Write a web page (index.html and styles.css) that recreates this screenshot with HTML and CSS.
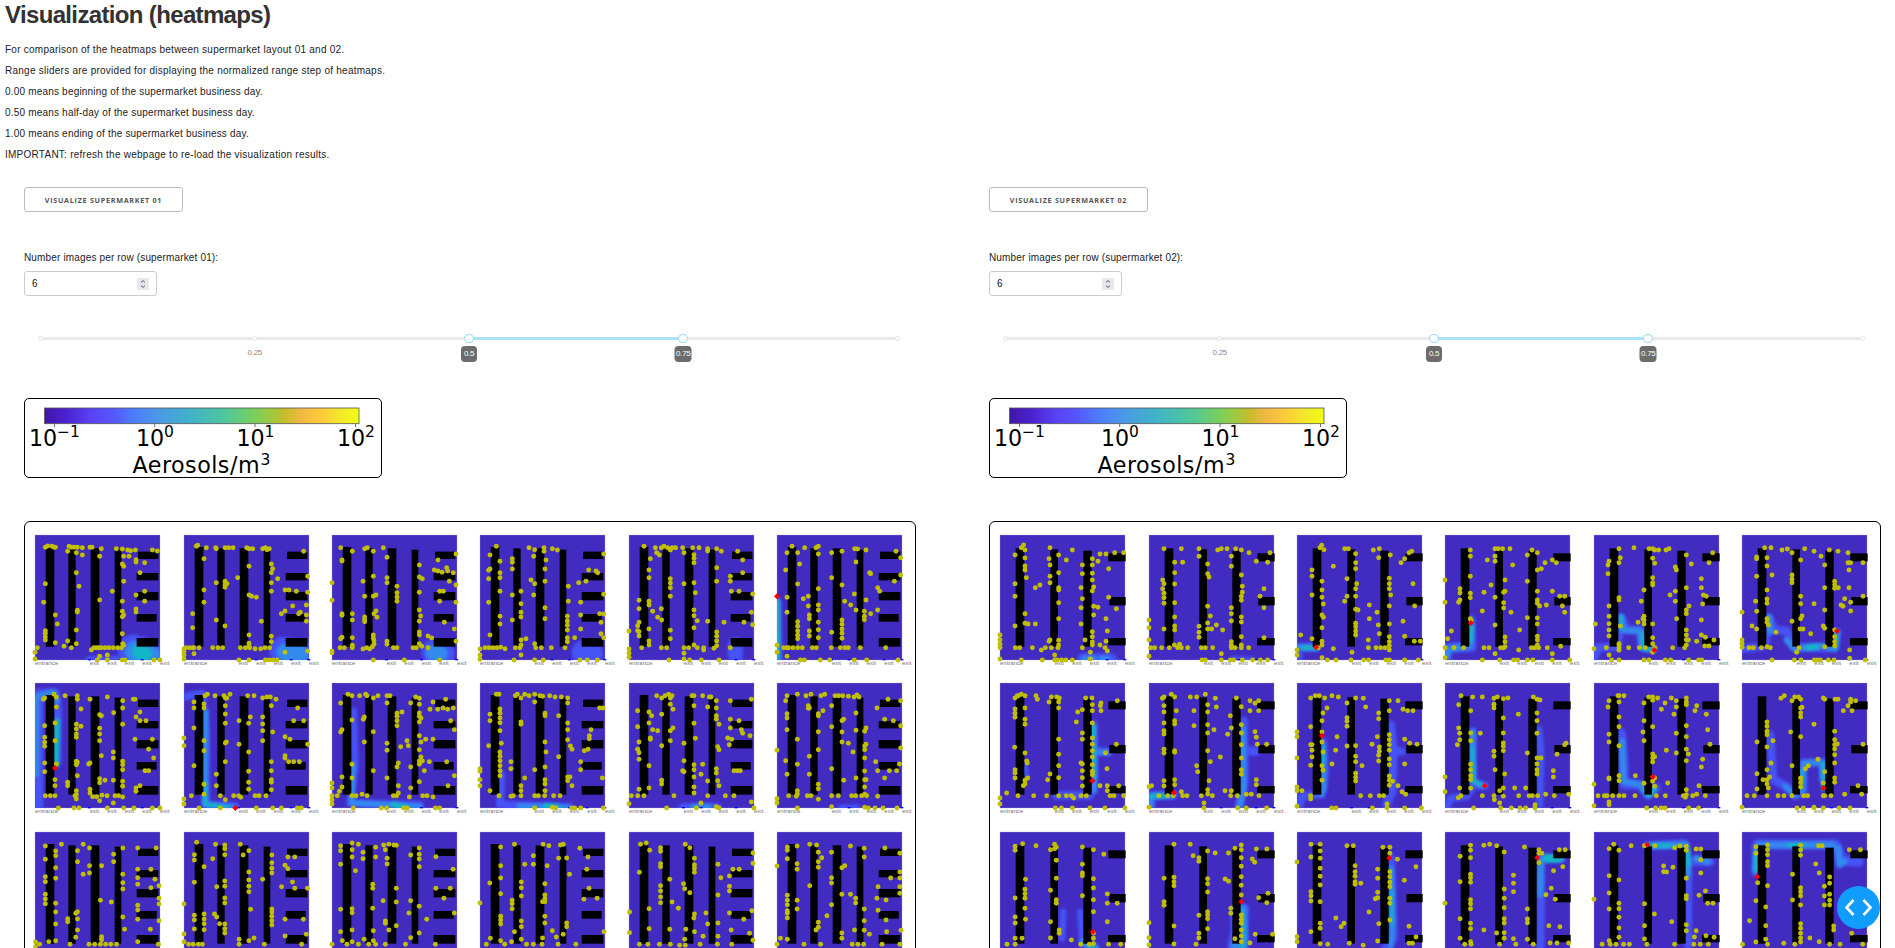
FILE: index.html
```html
<!DOCTYPE html>
<html lang="en">
<head>
<meta charset="utf-8">
<title>Visualization (heatmaps)</title>
<link rel="stylesheet" href="styles.css">
</head>
<body>
<header class="intro">
  <h1>Visualization (heatmaps)</h1>
  <p>For comparison of the heatmaps between supermarket layout 01 and 02.</p>
  <p>Range sliders are provided for displaying the normalized range step of heatmaps.</p>
  <p class="tight">0.00 means beginning of the supermarket business day.</p>
  <p class="tight">0.50 means half-day of the supermarket business day.</p>
  <p class="tight">1.00 means ending of the supermarket business day.</p>
  <p>IMPORTANT: refresh the webpage to re-load the visualization results.</p>
</header>
<main class="columns" id="columns"></main>
<button class="debug" aria-label="Toggle debug menu">
  <svg width="43" height="43" viewBox="0 0 43 43"><path d="M16.5 14 9.5 21.5 16.5 29M26.5 14 33.5 21.5 26.5 29" fill="none" stroke="#fff" stroke-width="2.6"/></svg>
</button>
<svg class="defs" width="0" height="0">
  <defs>
    <filter id="soft" x="-60" y="-60" width="500" height="500" filterUnits="userSpaceOnUse" color-interpolation-filters="sRGB"><feGaussianBlur stdDeviation="5"/></filter>
    <clipPath id="floor"><rect width="375" height="375"/></clipPath>
    <linearGradient id="scale">
      <stop offset="0" stop-color="#3f16a4"/><stop offset=".07" stop-color="#4c22d0"/><stop offset=".15" stop-color="#5a42f4"/><stop offset=".22" stop-color="#5558ff"/><stop offset=".28" stop-color="#4d7bff"/><stop offset=".36" stop-color="#4b98e8"/><stop offset=".47" stop-color="#41b4c6"/><stop offset=".58" stop-color="#51c79a"/><stop offset=".66" stop-color="#76cf62"/><stop offset=".73" stop-color="#a5c83b"/><stop offset=".76" stop-color="#c5bc2c"/><stop offset=".82" stop-color="#f3b844"/><stop offset=".88" stop-color="#fbcc3a"/><stop offset=".95" stop-color="#f2ec27"/><stop offset="1" stop-color="#f3fb15"/>
    </linearGradient>
  </defs>
</svg>
<script src="maps.js"></script>
</body>
</html>
```

FILE: styles.css
```css
* { box-sizing: border-box; }
html, body { height: 100%; }
body { margin: 0; overflow: hidden; background: #fff; color: #323232; font: 10px/14px "Liberation Sans", Arial, sans-serif; }
.intro { height: 187px; padding: 0 5px; }
.intro h1 { margin: 0 0 12px; font-size: 24px; line-height: 30px; padding-bottom: 1px; letter-spacing: -.65px; font-weight: 700; }
.intro p { margin: 0 0 7px; letter-spacing: .25px; white-space: nowrap; color: #222; }
.intro p.tight { letter-spacing: .19px; }
.columns { display: grid; grid-template-columns: 892px 892px; column-gap: 73px; padding-left: 24px; align-items: start; height: 761px; overflow: hidden; }
.column { display: flex; flex-direction: column; align-items: flex-start; }
.run { width: 159px; height: 25px; padding: 0; background: #fff; border: 1px solid #bbb; border-radius: 3px; color: #555; font: 700 7.2px/20px "Open Sans", sans-serif; letter-spacing: .72px; text-align: center; white-space: nowrap; }
.label { margin: 39px 0 6px; letter-spacing: .15px; color: #222; }
.count { display: flex; align-items: center; justify-content: space-between; width: 133px; height: 25px; padding: 0 7px; border: 1px solid #ccc; border-radius: 3px; color: #111; font-size: 10px; }
.spin { display: block; width: 12px; height: 12px; background: #e9e9ed; }
.slider { position: relative; width: 857px; height: 3px; margin: 41px 0 58px 16.5px; background: #e9e9e9; border-radius: 2px; }
.track { position: absolute; left: 50%; width: 25%; height: 3px; background: #abe2fb; }
.stop { position: absolute; top: -1px; width: 5px; height: 5px; margin-left: -2.5px; background: #fff; border: 1px solid #e3e3e3; border-radius: 50%; }
.handle { position: absolute; top: -3px; width: 10px; height: 9px; margin-left: -5px; background: #fff; border: 1px solid #96dbfa; border-radius: 50%; }
.mark, .tip { position: absolute; transform: translateX(-50%); font-size: 8px; letter-spacing: -.3px; }
.mark { top: 9px; color: #888; }
.tip { top: 9px; width: 16px; height: 16px; line-height: 16px; background: #6c6c6c; color: #fff; border-radius: 4px; text-align: center; font-size: 8px; }
.tip.wide { width: 17px; }
.legend { display: block; width: 358px; height: 80px; border: 1px solid #000; border-radius: 5px; }
.legend text { font-family: "DejaVu Sans", sans-serif; font-size: 22.2px; fill: #000; }
.legend .sup { font-size: 15.5px; }
.panel { display: grid; grid-template-columns: repeat(6, 125px); grid-auto-rows: 125px; gap: 23.33px; width: 892px; height: 600px; margin-top: 43px; padding: 13px 0 0 10.33px; border: 1px solid #000; border-radius: 6px; }
.map { display: block; overflow: visible; }
.map text { font-family: "Liberation Sans", Arial, sans-serif; font-size: 18px; fill: #777; }
.map .base { fill: #412bc0; stroke: #aaa0e0; stroke-width: 1; }
.map .agent { fill: #bfbf00; }
.map .ill { fill: #f00; }
.heat path { fill: none; stroke-linejoin: round; }
.debug { position: absolute; left: 1837px; top: 886px; width: 43px; height: 43px; padding: 0; border: 0; border-radius: 50%; background: #119dff; }
.debug svg { display: block; }
.defs { position: absolute; }
```

FILE: maps.js
```js
// Agents are written as "x:y,y,..." groups. Each frame carries the x origin of its own plot.
// Heat trails are [path, width, level]; ill agents are "x,y" pairs.
const ROWS_Y = [60, 505, 51];

const store01 = [
[46,"77:97,206,347,355,365,375 84:93 97:94 103:97 107:97,300,383 72:262 113:327 53:398 46:412,432 148:94 155:97 163:97 173:97,286,291 188:98,120 170:113,173,345,386 144:109,378 178:214 133:394 155:398 211:97 217:97 245:101 240:124,255,424 290:101 308:102,147,259,289,305,356,435 312:154,199,300,391,124 324:105 333:107 347:105 328:124 278:229 349:134,141,240,282,291 375:143,229,259 361:173 398:105 413:108 215:405 222:398 230:398 237:398 244:398 256:398 268:398 281:398 294:398 306:398 309:386 233:435 263:420,435 316:435 403:435 421:435",[["M340 405L388 420",92,1],["M348 410L390 424",66,2],["M360 410L374 418",44,3],["M205 430L300 430",14,1]]],
[491,"528:94 532:91 558:98 551:131,225,262 517:296,338 521:416,398 586:98 588:203,101,315 614:98,199,209,217,333 625:98 638:98 620:206 652:188 679:98 686:101,154,240,360,385,394 697:101 694:244 708:247 727:101 735:98 747:101 740:104 753:147,173,203,229,364,380 757:161 772:191 723:319 850:109 862:184,232,408 794:225,288,412 806:225 828:229 817:273 783:296 840:292 835:296 858:270,300,319 491:402,410,420,432 496:398 507:398 517:398 536:398 577:398 593:398 607:398 660:398 675:398 688:398 704:401 721:401 734:398 748:398 656:435 686:435 735:435 746:435 758:435 770:435",[["M788 406L850 420",82,1],["M795 412L838 418",54,2]]],
[36,"62:98,371 66:135,138,296,301,367,787 36:203,256,408,413 97:109,296,315,368,391,398 134:101,244,306,314,320 142:98 190:98 160:109,184,244,360,370,435 168:240,288 129:199 171:307 162:296,378,388 201:127,188,203,379,388 231:214,233,246,259,398 298:150,186,232,285,319,351,360,386 302:303 307:191 408:117,210,262,379 403:342 354:135 343:165 354:168 366:172 380:158 383:168 400:173 388:199 359:229,259 370:229 373:322 324:363,398 335:369 60:398 73:398 129:402 140:398 149:402 157:395 220:398 279:398 289:398 305:394 253:435 359:435",[["M340 410L368 415",72,1],["M342 414L358 416",50,2]]],
[481,"530:94 511:120,162,360 541:139,173,188,229,304,327 507:166,191,262 628:98 645:104,206,386 673:98,109 642:124,240 698:101 713:105 679:135 676:162,199,278,311 578:131,142,162,240,315 634:195 604:229,266,292,306,375,390,420 746:214,259 743:304,318,331,345,368,380 777:203 799:199 807:165 829:168 834:173 852:117,238,368 783:262,300,342 840:296 852:297 844:322,356 619:371 765:368 481:402,420,433 496:398 508:398 520:398 532:398 543:397 556:401 587:398 601:398 648:398 665:398 695:398 736:398 583:435 645:435 671:435 781:435 803:435 833:435",[["M792 412L815 415",72,1]]],
[26,"71:94 90:131 86:165,188,259,270,342,378,390 56:256,281,322,350,363 52:332,347 26:348,402,415,427 64:398 105:98 109:113 117:120 123:98,281,398 131:94 142:98 150:105,191,204,218,244,371 156:98 166:98 97:289 112:307 124:315 150:346 139:398 187:98 191:113,206,398,415,432 221:119,130,143,203,285,302,338,390 236:98 217:98 225:233 231:317 205:398 208:435 262:101,108,319 289:101,158,199,351,364,378,392 303:109 311:322 352:109 367:135,173 330:184,199,398 333:229 356:229 397:237,329 393:292 371:322 231:398 250:398,405 281:400 146:435 243:435 296:435",[["M345 390L345 420",46,1]]],
[471,"516:94 501:113,247,292,398,424 533:113,207,320,334,348,361,371 554:98 588:98 595:94,117,221,270,285,322,344,368 539:147 497:165 550:251 565:244,273 568:300,311,348,363 471:391,412 666:109,210,315,328,342,355,370 635:113,188,352 704:101 713:102 738:105,255 708:141 828:109 842:128,180 749:173 752:176 823:199 703:237 674:259 692:270 733:289,304,314 708:285 752:296 773:218,285 779:229 721:398 797:398 491:398 506:398 519:398 533:398 547:398 577:398 589:398 634:398 661:398 675:398 685:398 541:435 553:435 601:435 629:435 703:435 740:435 834:435",[["M472 260L475 430",24,1],["M471 260L472 430",18,3]],"471,244"],
[46,"71:554 75:550,633,668,683,695,745,771 103:539 110:548,577,748 106:625,678,795,813 136:543 173:543,554,743,783 184:583,635 170:629,643,658,668,740,750,828,840,853 211:554,745,824,835 207:748 263:547 282:594 309:558,580,629,740,750,765,800,815,847 341:554 346:554,674 361:592,618,813 349:607,820,830 379:618 245:603,723 240:600,641,658,678,792,804 256:797 281:712,730,797,865 398:674 387:704 402:730 376:768 387:768 77:843 92:843 106:843 144:803,813 166:843 219:846 231:846 247:842 262:843 286:843 297:843 312:880 116:880 163:880 178:880 240:858 263:880 343:880 398:880 421:880",[["M56 880L56 538L105 535L112 580L110 740",30,1],["M50 780L50 545L100 532L112 560",16,2],["M112 620L108 750",18,3]],"106,760"],
[491,"521:562,580,640,753 551:568,580,678,708,809,839 554:543 561:539 584:543 611:543 629:539 615:550,573,598,626,685,741,855 656:618,689 619:551 588:779,813 618:682 600:843,880 682:543 701:543 690:607 685:626,712,770,803,824 727:550,607,628,648,678 740:547 750:547 767:554 753:573,741,768,795,803,825 757:652 832:580 820:618 850:618 862:689 794:666,723,730 809:674 805:741 820:741 837:741 491:670,693,853,868 513:843 640:843 655:843 661:848 704:843 716:843 737:843 536:880 708:880 757:880 783:880 831:880 843:880",[["M495 545L545 537L557 650L557 870L645 875",24,1],["M556 590L553 868L640 878",16,2],["M555 800L555 870L620 878",10,3]],"645,880"],
[36,"84:539 96:543,616,749,790 62:565,652 66:645,787 119:543 141:543 137:539 174:543 160:550,651,768 130:614 133:607,682 201:543,565,686,707,790 210:543 231:596,605,618,633,757 246:592 287:547 298:551,569,595,605,622,663,705,739,749,801 272:565,757,820 303:610,682,727 339:562,674 330:584 353:584 369:580 383:584 400:580 377:554 392:618 403:645,783 261:678 242:696 265:693 317:674 307:739 328:741 380:741 384:813 313:768 235:745,813,835 36:805,820,843,855,868 58:830 66:817 52:843 96:843 108:843 126:839 141:843 220:843 230:843 268:847 308:843 321:843 339:847 100:880 184:880 200:880 251:880 262:880 346:880 359:880",[["M100 590L105 750L90 865L300 870",22,1],["M98 750L95 865L300 876",17,2],["M220 870L255 878",16,3]]],
[481,"530:539 538:539 511:599,618,828 541:583,596,610,624,648,712,725,738,753,768,783 545:686 507:693 574:741,762 587:543 593:539 604:550,622,629,813,828,843 615:539,790 628:543 645:539,562 661:543 669:545 690:543 706:547 725:547 744:550,565,625,645,675,787,798 676:596,603,682,757,795,808,828 679:712 717:603,726 645:765,843 752:694 757:704,813 840:580 850:580 814:645 809:663,672 794:708 805:704 783:741,765 848:790 481:762,770,795,813 538:843 574:845 581:843 656:843 675:843 702:843 721:843 645:880 698:878 708:880 756:880 765:880 783:880 851:880 751:787",[["M545 780L541 870L750 878",24,1],["M600 875L745 880",18,2],["M680 875L715 880",20,3]]],
[26,"52:588,636,704 56:682,714,734,824 90:670,674 86:592,625,753,820 109:543 94:603 97:645 112:648 124:550,599,693,797,808 134:543 145:539 155:543 150:550,569,648,678 158:584,640 215:543 221:543,573,626,750,765,787,817,835 247:543,749 225:671 191:686,738,771 187:768 267:547 262:577,799,843 272:547 288:558,580,603,614,762,775 296:629,705,813 292:696,798 330:558,614,640 356:618 322:670 334:674 327:690 393:554,862 363:645 367:656 389:663 242:779,865 341:768 351:768 360:768 33:843 52:843 71:843 161:843 315:843 341:843 26:867 139:880 228:880 288:876 296:880 401:880",[["M190 882L290 882",34,1],["M220 878L265 878",20,2]]],
[471,"501:543,597,610,645,779 497:558,738 532:539,674,749,828,838 558:543 573:539 565:573,581 568:580,725,779 595:597,603,651,705,809,822,854 603:543 614:539 609:588 645:543 656:543 668:543 685:545 702:547 711:541 717:547 635:573,636,762,843 666:618,652,682 671:614,797 685:686 708:595,647 738:640,689,795 734:650,694,705,730,769,795,817,839 699:712 804:554 842:558,633,700 771:580 794:614,790 820:618 767:741 773:768,845 808:768 830:768 838:748 708:790 471:707,852,865 506:843 529:845 562:843 573:843 655:843 695:843 707:843 725:843 740:843 532:880 635:876 734:878 745:880 765:880 789:880 831:880",[["M665 882L710 882",25,1]]],
[26,"44:93,133,185,200,238,252,266 72:88 62:108,122,158,190,265,291,327,377 100:107,140,290,345,312 110:88 121:99,152,174 110:178 142:152,365,374 163:118,140 179:99,178,203,222,306 205:99,163,188,208,271,285,313,380 237:99 228:163,218 235:193 242:212,250,267,317 140:256 159:261 83:311,320 97:295,367 182:343 227:343 27:381,395 34:388 50:380 87:388 120:388 130:388 140:388 149:388 158:388 168:388 241:388",[]],
[285,"307:82 303:119,135,202,301,315,342 320:155,297,312,326,344 340:88 335:131 356:90,101,119,198,214,249,264,327,341,354 342:215,306 338:297 383:88 388:120 398:107,171,195,214,230,377 401:283 422:193 438:120,143,160,174,282,291,304,317,330 455:215 466:126,161 478:126,220 474:201 500:220 461:151,313,363 493:313 498:358 285:267,357,380 293:388 301:388 310:388 317:388 347:326 381:373,388 407:369 425:388 490:388",[]],
[544,"559:92,107,148,283,350 579:84,104,126,281,293,345,380 590:88 598:112,131 620:97,126 615:208,220,280 634:90 643:88,345 652:90 640:130,147 637:104,318,325 585:167 633:257 656:91,220,261,332 681:120,257,368 696:99,118,132,155,274,354 725:125,220 750:220 755:163 739:250 678:294 709:313 757:294 544:388 562:377 600:373 616:347,377 570:388 590:388 608:388 620:388 637:388 672:388 724:388",[]],
[802,"838:96,152,189,236,304,315,327,377 862:88,350 880:148 895:122,148 912:88 922:92 919:152 939:130 953:129,324,335 947:88 942:90 976:100 990:126 988:163 958:178 874:201,218,243,318,335,373 819:204 802:264 858:256,266,281 915:206,240,251,260,304,324 911:260,369 935:366 928:347 992:220 1006:250 983:253 1018:350 947:358 969:388 813:388 820:370 845:388 857:380 883:388 895:388 910:388 938:388",[]],
[1060,"1080:88 1090:84 1115:98,109,146,155,212,228,246,263 1096:106 1158:88 1166:98,233 1174:130,149,160,172,297,350 1078:172 1131:193 1135:261 1155:206 1157:221 1215:148,240,324,364 1276:114,145,376 1252:163 1241:163 1220:188 1235:183,214,228,294 1061:291,353 1095:281,341 1146:280 1173:309 1194:294 1260:313 1270:355 1274:287 1189:364 1197:327 1131:343 1159:343 1157:373 1238:345 1078:388 1093:388 1113:388 1132:388 1148:391 1158:391 1184:388 1214:388 1239:388",[]],
[1319,"1337:96,106,131,241,256,269,295,309,373 1354:93,146,163,256,282 1376:88 1388:90 1391:112,140,157,322,337 1397:128 1414:112,188,204,269 1447:93 1437:152 1432:158,238,354,370 1376:212 1447:238 1456:250,264 1471:100,126,282,317,346 1507:99 1533:115,171,189,215,235 1517:189 1495:215,286 1493:250 1509:255,315 1406:302 1387:345 1480:358 1460:388 1450:388 1470:388 1454:345 1510:350 1535:346 1337:287 1319:153,388 1325:370 1366:388 1395:388 1502:388 1533:388",[]]
];

const store02 = [
[46,"110:98 117:90 121:105,129,153,165,296 91:120,206,244,333 125:188 130:327 152:327,218 166:210 121:325 196:98,150,184,203,375 193:131,379 222:120,173,218,225,263,311,376,390 263:105 245:135 323:131,150,175,195,228,350,365,381,390 346:117 364:117 390:113 417:113 340:139 293:150,176,251 372:161,247 327:216,274,300 340:277 395:281 289:218,278,327 364:311,379 368:348,408 301:375 346:390 46:360,374,388,398,432 92:398 105:398 143:398 170:405 182:398 200:398 220:398 293:398 210:420,435 317:412,432 110:435 173:435 218:435 231:435 244:435 263:435 361:398",[["M295 432L380 432",34,1],["M300 432L325 432M352 432L366 432",20,2]]],
[491,"536:101,206,235,248,342,265 568:142,173,207,263,306,333,345 588:101 592:142 532:195,221 641:101,124,334,352,367 667:147,176,274,342,324 671:186 697:105 708:101 725:101 751:101 768:105,180,244,256,306,321,365,390 791:113 813:139 854:113 847:142 738:124,154,278,296,318,380,391 771:214,232 836:221,278,368 824:244 675:303 693:330 679:342 712:345 491:315,338,375,424 496:398 508:398 529:398 552:398 577:398 588:398 607:398 648:398 660:398 682:398 567:390 583:388 708:416,435 738:398 749:398 768:398 790:398 650:435 660:435 735:435 745:435 771:435 802:435 825:435 847:435",[["M745 434L800 436",20,1]]],
[36,"105:98 110:91 117:104 145:154 81:165,184,240,371 111:199,225,247,300,338,379,390 115:267,307 47:360 36:405,420 179:101 190:101 212:116,143,161,221,244,283,325,335,348,360 186:191,244 215:206 179:259 219:285 283:101 265:105 281:128 316:120 313:190,206,221,273,327,365,380,392,405 317:240 372:113 380:109 359:131 348:143 384:206 389:273 354:319 253:270,311 276:292 280:330 283:356 250:375 359:364 406:379 388:379 100:398 145:401 201:412 250:398 273:398 287:398 300:398 111:428 127:435 153:435 198:435 236:435 251:435 303:435 313:435 359:435 400:435",[["M36 398L90 396M40 405L40 430",25,1],["M38 397L95 398",18,2],["M55 398L95 398",12,3]],"93,397"],
[481,"557:105,124,184,235,248,311 559:316 481:195,262,398,428 526:221,234,255 522:262 631:101,124,139,247,330 641:101 654:101 676:101 608:135 684:150 619:210 598:232 593:288 661:195,229,366,380,395 657:232,263,279 728:120,199,308 742:105 758:113,165,229,255,265,309,327,364,375,390 770:161 781:143 803:135,229,416,435 815:143 825:244 840:244 833:273 840:292 679:292 765:273 785:270 705:345 500:348 489:371 508:398 537:398 598:398 613:398 631:416 648:398 657:398 702:405 740:398 750:398 762:398 788:398 828:394 593:435 645:435 687:435 699:435 728:435 745:435 855:435",[["M485 430L490 398L560 396L558 315",30,1],["M557 325L555 393L490 402L486 425",20,2],["M560 335L558 375",14,3]],"559,324"],
[26,"101:101,143,248,255,386,398,406 146:98 105:128,333 71:139,273,304,326,345,363 68:150,176 30:327 26:401 191:101 202:101,130,188,203,210,327,368,386,412 208:105,145,398 220:105 242:105 251:101 176:225,304,315,327 168:259 173:311 158:322 303:120,218,285,296,345,360,374,390 318:147 270:156,229,259 273:165 348:191,218,315,360 382:113 371:143 254:240 311:273 354:240 363:244 352:267 309:375 334:379 360:367 386:375 274:311 63:398 71:420 101:390 130:398 162:398 180:398 262:398 298:398 358:393 371:393 79:435 101:435 176:435 191:435 240:435 256:435 310:435 340:435 349:435",[["M28 425L36 398L95 395L108 310L125 345L165 345L170 395L205 400",26,1],["M108 305L112 345L165 347L172 400L205 403",18,2],["M106 305L108 335M170 355L173 400L205 404",10,3]],"207,405"],
[471,"539:98 558:98 515:126,131,184,289,342 561:180 546:128,153,225,252,265,311,322 550:330 471:292,375,385,397 512:259 501:333 591:105 607:102 621:113,180,193,203,319 647:135,244,266,311 659:101 687:109,266 708:124 719:150,218,285,340 715:333 733:105 759:109 789:113,143 797:143,262,288 792:165,218 834:143,244 749:199,209,220 760:218 779:251 768:270 774:274 651:303 645:342 654:342 573:352 677:356 749:345,365,380,393 492:398 505:398 529:398 546:395 642:398 635:412 719:395 794:405,430 556:398 561:435 628:435 648:435 688:435 697:435 706:435 730:435 747:435 841:435",[["M475 402L540 392L553 310L568 345L605 347L625 395L720 400L750 395L755 350",25,1],["M552 305L557 350M605 375L630 402L710 392L750 402L756 355",18,2],["M668 398L695 396",16,3],["M753 370L752 395",9,3]],"756,348"],
[46,"91:550,583,596,608,765,775 101:543 110:539 121:543,580,614,629 98:543 154:543 158:554 193:562 200:547 216:547 224:550 222:562,580,674,719,753,789 303:550 322:550 279:592 275:622 323:570,588,625,670,689,708,727,750,770,780 293:585,655,674,748,768,789,814 289:745 349:565,588 398:558 347:573 362:715 395:689 90:698 121:715 126:739 128:745 367:762 91:790 129:790 189:795 121:797,808 116:813 402:813 346:813 368:813,828 66:835 100:843 147:843 196:778 186:843 222:843 245:843 260:843 289:843 305:843 376:843 388:843 417:843 46:850,868 267:850 212:880 230:880 263:880 316:880 361:880 421:880",[["M215 842L315 842L328 780L326 630M330 710L372 712",26,1],["M326 635L330 830M340 712L372 713",15,2],["M325 700L325 790M325 635L325 665",13,3],["M120 750L126 780",16,1]],"323,798"],
[491,"536:547,573,592,625,648,658,704,715,798,814 558:539 531:551 568:547,618,628,708,713,795,810 573:588 588:831 615:547 634:547 660:539 690:551 626:588,633 667:570,592,630,655,708,825,838 686:645 693:577 735:603 738:640,828 753:550 768:576,630,655,690,730,765,779 794:558,588 820:558,588 809:566,651 813:668,795,810 727:659 705:727 675:741 634:753 637:771 671:798 719:828 491:816 499:813 521:843 547:843 564:843 592:843 605:843 648:843 681:843 736:843 756:843 783:839 798:839 821:843 844:689 816:689 491:878 656:865,880 757:880 783:880 844:880",[["M495 880L500 843L565 840M762 880L776 800L774 620M780 710L812 710",27,1],["M494 878L497 844L560 842M772 640L775 820L762 875",17,2],["M492 845L550 843",12,3]],"566,834"],
[36,"77:550,636,690 91:543 103:543 119:550 141:543 160:547 126:580 114:595 111:618,652,682,753,797 186:565,609,620,635,694 212:550,693,725,741,776,788,799 235:551 242:577 281:595,612,722,739 313:558,588,660,675,690,707,733,750,784,797,812 339:558,813 354:584 368:588 384:588 277:666 261:689 283:697,710 156:666 152:707 359:674,748 374:686 396:689 36:652,666,730,817,828 81:690,707,727 77:752 114:712,767 141:748 231:753 51:828 77:843,853 227:843 256:843 283:843 296:843 362:839 323:800 351:831 306:868,880 36:875 140:880 153:880 262:880 359:880 409:880",[["M40 880L50 845L110 838L120 770L113 680M318 630L325 710L322 830L305 870M330 710L350 710",25,1],["M113 690L117 820L108 840",15,2],["M113 700L114 740",10,3]],"111,663"],
[481,"529:543 522:570,640 558:588,655,678,749,765,783,795,821 564:547 593:547 628:551,569,580,710,725 638:547 656:552,610,655,685,695,708,820,845 670:550 701:599 587:656 525:656,675 518:690 757:554,595,618,656,730,748,765,778 746:547 766:556 631:765 660:778 728:715 769:730 806:768,787 817:719 844:686 840:690 481:787,831 525:820 529:843 593:843 628:843 645:828 690:820 702:843 733:843 723:820 743:843 759:843 783:839 809:843 852:839 521:849 567:880 629:855 645:865 648:880 680:880 706:880 723:880 751:870,880",[["M486 880L498 850L545 845L564 815L565 650M565 813L600 813M762 645L768 710L765 870",23,1],["M563 650L566 800L600 813",16,2],["M562 700L566 800L590 812",10,3]],"600,813"],
[26,"71:558,659,682,790,793,862 101:543,562,607,636,693,783,798 116:543 68:577 98:543 190:547 202:547,557,636,718,730,742,800 217:550 208:726,790,815 258:550 273:558,577,656,715 176:565,618,678,806 173:652 239:565 228:584 266:599 303:550,562,570,633,666,704,738,825,840 334:573 329:588 363:599 367:645 374:689 352:734 348:757 243:707 309:718 150:783 247:805 26:809 341:813 360:843 322:843 334:839 294:843 300:848 240:843 213:843 38:843 57:843 65:843 82:843 101:843 116:843 149:843 71:870 184:880 211:880 227:880 239:880 310:880 340:880 26:873",[["M108 655L115 750L115 808L170 812L188 842L212 820",28,1],["M110 680L115 800L175 812L190 840L205 825",18,2],["M172 825L190 843L208 820",12,3]],"202,786"],
[471,"588:551 598:543 546:622,635,650,660,697,765,795,808 564:678 558:745 516:682,777,823 629:547 641:547 621:558,753,843 647:554,580,595,607,666,792,804,817 651:578 617:652 687:629,878 715:550,805 719:554,771 750:554 759:554 789:573 797:554,562 812:558 775:588 801:588 834:689 749:650,675,690,703,720,745 757:688 699:734 670:753 661:762 647:790 554:787 550:820 534:795 819:813 830:839 779:839 719:843 738:843 486:843 508:843 546:843 579:843 597:843 656:843 668:843 715:843 749:790,803 471:878 636:880 655:880 687:880 715:880 762:880 795:880",[["M555 660L565 795L605 815L630 843L655 835L655 745L712 742L715 800",25,1],["M652 830L655 745L712 743L715 790M600 815L632 842",16,2],["M652 765L652 800M714 745L714 825",9,3]],"715,820"],
[26,"52:94,106,249,306,324,370,388 65:86 88:92 120:88,101 123:97,254,265,190,136 113:104,226,320,369 168:96,148,174,242,182 187:104,191,219,254,290,354,370,386 205:118 70:193,313 69:223,236,250,280 211:237,265,320 228:265 128:345,355 149:375 165:388 180:388 38:388 64:370 213:388 234:388",[["M133 370L135 290M164 290L168 390L190 400",14,1],["M170 380L190 398",16,2],["M178 385L182 395",12,3]],"186,350"],
[282,"325:88,187,200,212,333,387 308:190,260,271 353:88 358:122 368:128,139,301,355,369 383:108,191,206,231,290,300,311,341 396:114 419:114,199 413:192 441:90,104,128,154,185,211,240,300,313,325,345,363,380 430:100 467:102 485:102 464:142 460:132 423:280,295 471:248 487:235 485:263 282:323,368,390 363:388 430:371 456:384 465:358 495:358",[["M425 400L430 350L430 280M443 400L447 280",20,1],["M443 280L447 390M428 392L440 390",15,2],["M443 290L443 400",8,3]],"441,260"],
[538,"562:88,126,230,242,258,350 578:88,108,130,160,184,210,260,325,340,386 538:141,365,380 624:92 635:92 638:152,170,184,208,200 648:205 605:309 619:325 628:385 614:335 662:291 686:97 698:97,115,170,185,202,215,250,265,315 677:163,190,232,248,378 673:251 679:326 723:196 731:334,385 743:155,366 711:133 591:388 652:391 737:385",[["M700 130L705 370L690 400",17,1],["M700 160L703 320L700 395",11,2],["M701 230L701 330",6,3]],"697,129"],
[793,"819:124,200,311,370 837:91,106,128,178,188,202,254,266,281,325,341,380 860:91 870:88 882:92,354 895:111,222,250,278,311,324,353,370 930:96 955:104,115,143 960:115 990:104 1000:104 996:155 980:167 976:220 967:239 983:253 793:265 911:181,205,230,371 935:282,312,323,373 972:332 860:345 991:335 838:388 827:388 887:388 915:388 945:388 974:384 986:384 1006:384",[["M957 400L958 270L958 130L995 130",18,1],["M957 240L958 132L992 130",13,2],["M968 130L990 130",17,3]],"952,128"],
[1049,"1075:101,182,234,282,377 1083:88 1092:106,195,265,281,307,339,367 1113:92 1136:92 1154:92 1136:266,332,372 1153:297 1169:153,170 1185:157 1174:171 1188:98 1197:93 1208:94,106,190,242,251,329,347 1233:102,134,174 1241:228 1225:102 1230:241 1245:265 1254:265 1049:253 1183:320 1222:366 1242:362 1256:367 1225:347 1063:388 1077:388 1087:388 1100:388 1110:388 1140:388 1188:388 1221:388 1232:388 1246:388",[["M1140 92L1205 85L1210 140L1250 140M1211 140L1211 390",18,1],["M1145 92L1208 90L1210 180M1225 130L1245 140",14,2],["M1150 92L1180 92M1210 110L1212 150",9,3]],"1141,89"],
[1304,"1328:95,115,257,381 1348:90,104,119,140,152,212 1331:203 1405:91,105,121,218,230,243,270,326,340,355,369,381 1436:92 1442:92 1431:147 1437:174 1391:178,255 1455:186,205,256,238,270 1446:214,243,270 1462:333,345 1489:104 1508:104 1317:317 1345:276,332,373 1376:385 1421:369 1437:380 1473:388 1493:355 1305:388 1348:388 1395:388 1455:388 1512:388",[["M1328 170L1330 88L1465 88L1475 135L1505 140",22,1],["M1328 160L1333 90L1460 90M1470 100L1472 150L1480 140",14,2],["M1328 110L1328 170M1385 90L1410 90",9,3]],"1330,185"]
];

const shelves = {
  1: [[32,36,26,299],[100,40,22,295],[167,40,26,295],[239,44,20,291],[309,50,61,22],[305,114,65,22],[305,171,65,25],[305,237,60,23],[305,309,65,26]],
  2: [[47,40,26,295],[151,43,23,292],[250,47,25,288],[325,55,52,24],[328,186,49,25],[324,309,53,22]]
};
const heatColour = { 1: "#4653f7", 2: "#318bed", 3: "#13b6c4" };

function drawMap(store, frame, i) {
  const [ox, dots, heat, ill] = frame;
  const row = Math.floor(i / 6);
  const oy = ROWS_Y[row];
  // The third row is recorded on a horizontally compressed scale.
  const sx = row < 2 ? 1 : store === 1 ? 1.722 : 1.741;
  const px = x => ((x - ox) * sx).toFixed(1);
  let agents = "";
  for (const group of dots.split(" ")) {
    const [x, ys] = group.split(":");
    for (const y of ys.split(",")) agents += `<circle cx="${px(x)}" cy="${y - oy}" r="7.4"/>`;
  }
  const trails = heat.map(([d, w, level]) => {
    const path = d.replace(/([ML])(\d+) (\d+)/g, (m, c, x, y) => `${c}${px(x)} ${y - oy}`);
    const width = row === 2 ? w * 1.4 : w;
    return `<path d="${path}" stroke="${heatColour[level]}" stroke-width="${width}" stroke-linecap="round" filter="url(#soft)"/>`;
  }).join("");
  const racks = shelves[store].map(([x, y, w, h]) => `<rect x="${x}" y="${y}" width="${w}" height="${h}"/>`).join("");
  // Labels of the third row fall below the fold.
  const exits = row === 2 ? "" : [164, 217, 269, 322, 375].map(x => `<rect x="${x - 5}" y="372" width="9" height="4" fill="#00f"/><text x="${x}" y="389">exit</text>`).join("") + `<text x="0" y="389">entrance</text>`;
  let infected = "";
  if (ill) {
    const [x, y] = ill.split(",");
    infected = `<path class="ill" d="M${px(x)} ${y - oy - 9}l9 9-9 9-9-9z"/>`;
  }
  return `<svg class="map" width="125" height="125" viewBox="0 0 375 375"><rect class="base" width="375" height="375"/><g clip-path="url(#floor)"><g class="heat">${trails}</g></g>${racks}${exits}<g class="agent">${agents}</g>${infected}</svg>`;
}

function legend() {
  const ticks = [[10.5, 4, "−1"], [110.7, 111, "0"], [211, 211.5, "1"], [311.5, 312, "2"]];
  const labels = ticks.map(([t, x, e]) => `<path d="M${t + 19} 25v3" stroke="#333" stroke-width=".7"/><text x="${x}" y="46.5">10</text><text class="sup" x="${x + 28}" y="38">${e}</text>`).join("");
  return `<svg class="legend"><rect x="19.5" y="9" width="314.5" height="15.7" fill="url(#scale)" stroke="#555" stroke-width=".8"/>${labels}<text x="107.5" y="74" textLength="127">Aerosols/m</text><text class="sup" x="235.5" y="66">3</text></svg>`;
}

document.getElementById("columns").innerHTML = [[1, store01], [2, store02]].map(([id, frames]) => `
<section class="column">
  <button class="run">VISUALIZE SUPERMARKET 0${id}</button>
  <div class="label">Number images per row (supermarket 0${id}):</div>
  <div class="count"><span>6</span><svg class="spin" viewBox="0 0 12 12"><path d="M4 4.5 6 2.5 8 4.5M4 7.5 6 9.5 8 7.5" fill="none" stroke="#8f8f9d" stroke-width="1.2"/></svg></div>
  <div class="slider"><i class="track"></i>${[0, 25, 100].map(p => `<i class="stop" style="left:${p}%"></i>`).join("")}<i class="handle" style="left:50%"></i><i class="handle" style="left:75%"></i><span class="mark" style="left:25%">0.25</span><span class="tip" style="left:50%">0.5</span><span class="tip wide" style="left:75%">0.75</span></div>
  ${legend()}
  <div class="panel">${frames.map((f, i) => drawMap(id, f, i)).join("")}</div>
</section>`).join("");
```
